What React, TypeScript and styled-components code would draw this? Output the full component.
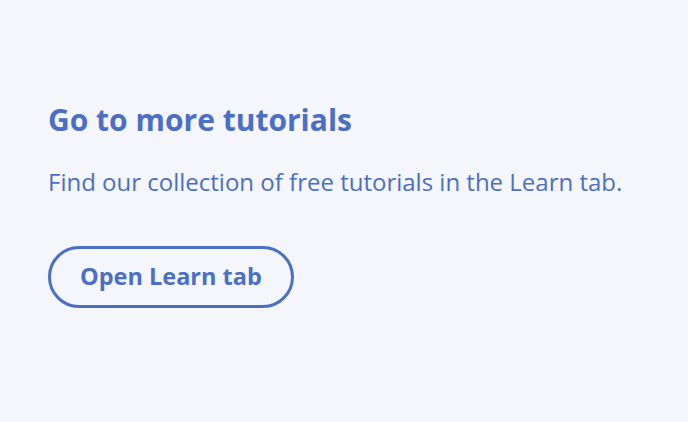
import React from 'react';
import styled, { createGlobalStyle } from 'styled-components';

const GlobalStyle = createGlobalStyle`
  html, body {
    margin: 0;
    padding: 0;
    background: #f5f6fc;
  }
  body {
    font-family: 'Open Sans', 'Noto Sans', sans-serif;
  }
`;

const Page = styled.div`
  box-sizing: border-box;
  width: 688px;
  height: 422px;
  display: flex;
  flex-direction: column;
  padding: 102px 48px 0 48px;
  background: #f5f6fc;
  color: #4a6fc4;
`;

const Title = styled.h2`
  margin: 0 0 28px 0;
  font-size: 30px;
  font-weight: 700;
  line-height: 36px;
`;

const Body = styled.p`
  margin: 0 0 48px 0;
  font-size: 24px;
  line-height: 32px;
`;

const OutlineButton = styled.button`
  align-self: flex-start;
  box-sizing: border-box;
  height: 62px;
  padding: 0 29px;
  border: 3px solid #4a6fc4;
  border-radius: 31px;
  background: transparent;
  color: #4a6fc4;
  font-family: inherit;
  font-size: 23.5px;
  font-weight: 700;
  line-height: 1;
  cursor: pointer;
`;

const App = (): JSX.Element => {
  return (
    <>
      <GlobalStyle />
      <Page>
        <Title>Go to more tutorials</Title>
        <Body>Find our collection of free tutorials in the Learn tab.</Body>
        <OutlineButton>Open Learn tab</OutlineButton>
      </Page>
    </>
  );
};

export default App;
